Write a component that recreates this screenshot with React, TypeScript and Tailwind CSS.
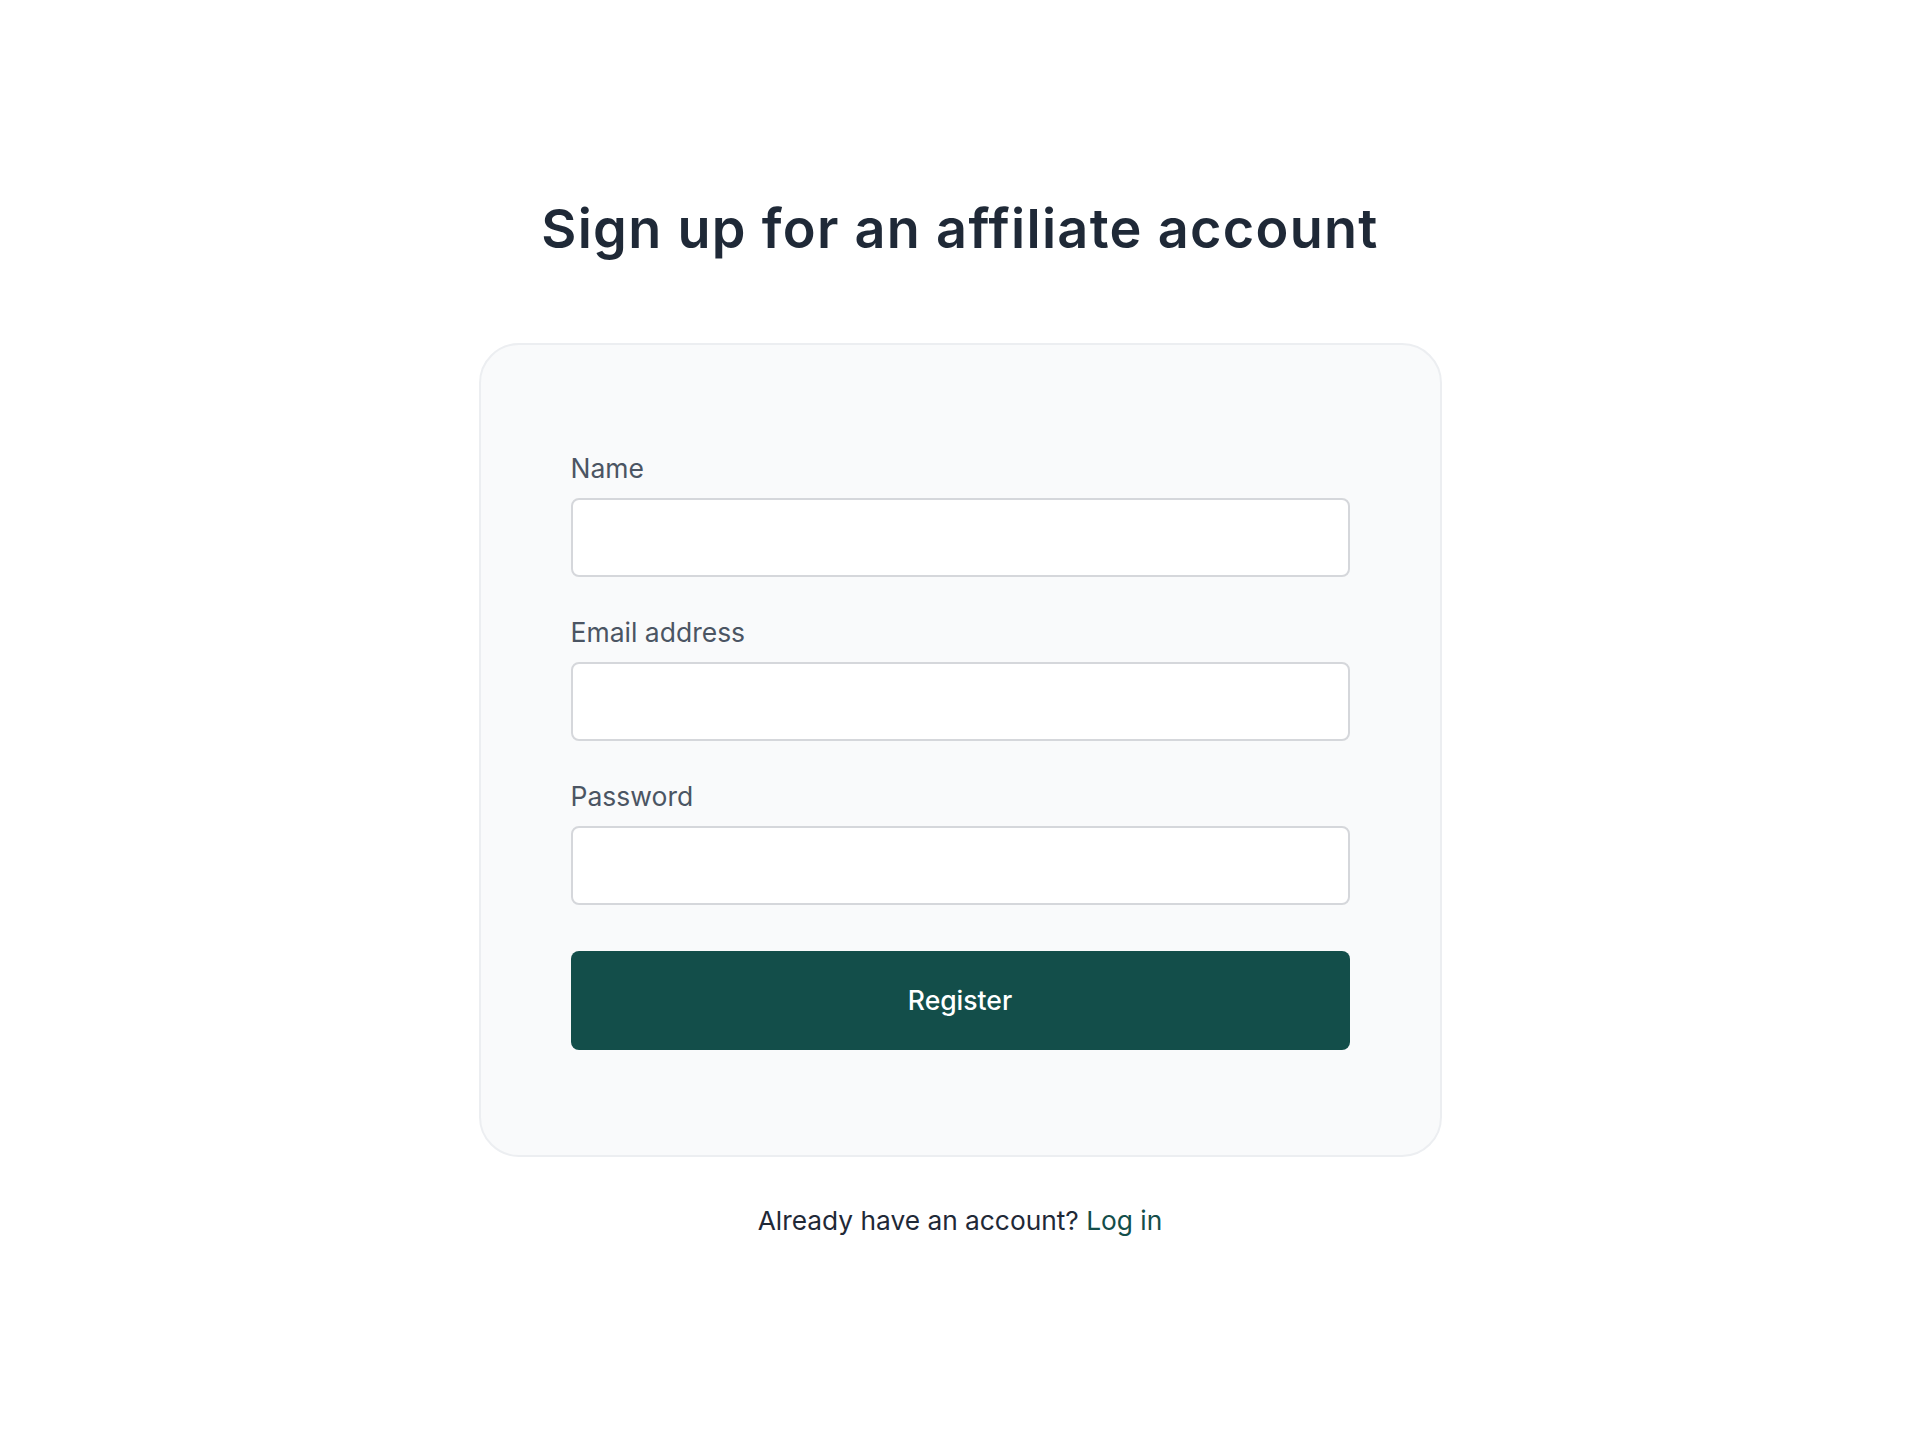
import React, { useState } from 'react';

const font = { fontFamily: 'Inter, "Noto Sans", sans-serif' };

const Field: React.FC<{ label: string; type: string; value: string; onChange: (v: string) => void }> = ({
    label,
    type,
    value,
    onChange,
}) => (
    <div className="flex flex-col">
        <label className="text-[26.5px] leading-[40px] text-[#4b5563] mb-[10px]">{label}</label>
        <input
            type={type}
            value={value}
            onChange={(e) => onChange(e.target.value)}
            className="h-[79px] w-full rounded-[8px] border-2 border-[#d5d7db] bg-white px-5 text-[27px] text-[#1f2937] focus:outline-none"
        />
    </div>
);

export default function App() {
    const [name, setName] = useState('');
    const [email, setEmail] = useState('');
    const [password, setPassword] = useState('');

    return (
        <div className="min-h-[1429px] bg-white flex flex-col items-center pt-[198px]" style={font}>
            {/* Page title */}
            <h1 className="text-[54px] leading-[61px] font-semibold text-[#1f2937] tracking-[1.3px] [font-variant-ligatures:none]">
                Sign up for an affiliate account
            </h1>

            {/* Register card */}
            <div className="mt-[84px] w-[963px] rounded-[40px] border-2 border-[#eceef1] bg-[#f9fafb] px-[90px] pt-[103px] pb-[105px]">
                <form onSubmit={(e) => e.preventDefault()} className="flex flex-col gap-[35px]">
                    <Field label="Name" type="text" value={name} onChange={setName} />
                    <Field label="Email address" type="email" value={email} onChange={setEmail} />
                    <Field label="Password" type="password" value={password} onChange={setPassword} />
                    <button
                        type="submit"
                        className="mt-[11px] h-[99px] w-full rounded-[8px] bg-[#134e4a] text-white text-[26.5px] font-medium"
                    >
                        Register
                    </button>
                </form>
            </div>

            <p className="mt-[44px] text-[26.3px] leading-[39px] text-[#1f2937]">
                Already have an account? <a href="#" className="text-[#134e4a]">Log in</a>
            </p>
        </div>
    );
}
